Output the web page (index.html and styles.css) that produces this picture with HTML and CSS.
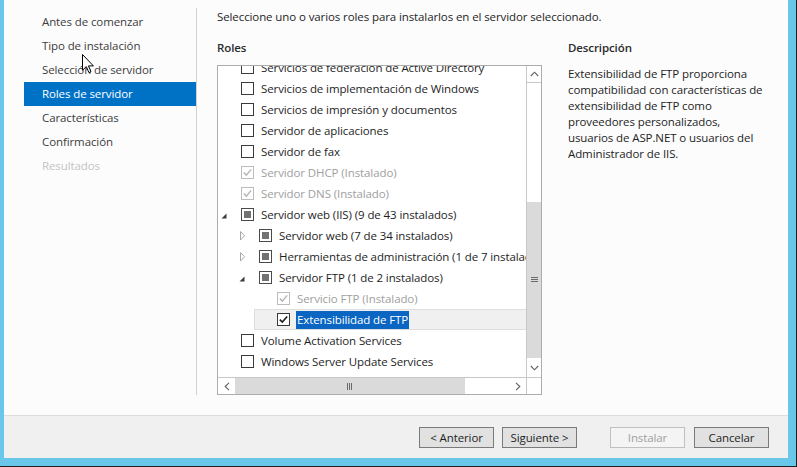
FILE: index.html
```html
<!DOCTYPE html>
<html lang="es">
<head>
<meta charset="utf-8">
<title>Asistente para agregar roles y características</title>
<link rel="stylesheet" href="styles.css">
</head>
<body>
<div class="window">
  <div class="dialog">
    <div class="main">
      <nav class="nav">
        <div class="nav-item">Antes de comenzar</div>
        <div class="nav-item">Tipo de instalación</div>
        <div class="nav-item">Selección de servidor</div>
        <div class="nav-item active">Roles de servidor</div>
        <div class="nav-item">Características</div>
        <div class="nav-item">Confirmación</div>
        <div class="nav-item disabled">Resultados</div>
      </nav>
      <div class="vsep"></div>
      <div class="content">
        <div class="intro">Seleccione uno o varios roles para instalarlos en el servidor seleccionado.</div>
        <div class="cols">
          <div class="left">
            <div class="heading">Roles</div>
            <div class="tree">
              <div class="list">
                <div class="rows">
                  <div class="row"><span class="exp"></span><span class="cb"></span><span class="lbl">Servicios de federación de Active Directory</span></div>
                  <div class="row"><span class="exp"></span><span class="cb"></span><span class="lbl">Servicios de implementación de Windows</span></div>
                  <div class="row"><span class="exp"></span><span class="cb"></span><span class="lbl">Servicios de impresión y documentos</span></div>
                  <div class="row"><span class="exp"></span><span class="cb"></span><span class="lbl">Servidor de aplicaciones</span></div>
                  <div class="row"><span class="exp"></span><span class="cb"></span><span class="lbl">Servidor de fax</span></div>
                  <div class="row dis"><span class="exp"></span><span class="cb"><svg width="11" height="11" viewBox="0 0 11 11"><path d="M1.8 5.6 L4.3 8.1 L9.2 2.4" fill="none" stroke="#b4b4b4" stroke-width="1.4"/></svg></span><span class="lbl">Servidor DHCP (Instalado)</span></div>
                  <div class="row dis"><span class="exp"></span><span class="cb"><svg width="11" height="11" viewBox="0 0 11 11"><path d="M1.8 5.6 L4.3 8.1 L9.2 2.4" fill="none" stroke="#b4b4b4" stroke-width="1.4"/></svg></span><span class="lbl">Servidor DNS (Instalado)</span></div>
                  <div class="row"><span class="exp"><svg class="tri-open" width="6" height="6" viewBox="0 0 6 6"><polygon points="5.5,0.5 5.5,5.5 0.5,5.5" fill="#3c3c3c"/></svg></span><span class="cb ind"><span class="fill"></span></span><span class="lbl">Servidor web (IIS) (9 de 43 instalados)</span></div>
                  <div class="row l1"><span class="exp"><svg class="tri-closed" width="6" height="10" viewBox="0 0 6 10"><polygon points="0.5,0.5 4.5,4.8 0.5,9" fill="none" stroke="#a8a8a8"/></svg></span><span class="cb ind"><span class="fill"></span></span><span class="lbl">Servidor web (7 de 34 instalados)</span></div>
                  <div class="row l1"><span class="exp"><svg class="tri-closed" width="6" height="10" viewBox="0 0 6 10"><polygon points="0.5,0.5 4.5,4.8 0.5,9" fill="none" stroke="#a8a8a8"/></svg></span><span class="cb ind"><span class="fill"></span></span><span class="lbl">Herramientas de administración (1 de 7 instalados)</span></div>
                  <div class="row l1"><span class="exp"><svg class="tri-open" width="6" height="6" viewBox="0 0 6 6"><polygon points="5.5,0.5 5.5,5.5 0.5,5.5" fill="#3c3c3c"/></svg></span><span class="cb ind"><span class="fill"></span></span><span class="lbl">Servidor FTP (1 de 2 instalados)</span></div>
                  <div class="row l2 dis"><span class="exp"></span><span class="cb"><svg width="11" height="11" viewBox="0 0 11 11"><path d="M1.8 5.6 L4.3 8.1 L9.2 2.4" fill="none" stroke="#b4b4b4" stroke-width="1.4"/></svg></span><span class="lbl">Servicio FTP (Instalado)</span></div>
                  <div class="row l2 sel"><span class="exp"></span><span class="cb"><svg width="11" height="11" viewBox="0 0 11 11"><path d="M1.8 5.6 L4.3 8.1 L9.2 2.4" fill="none" stroke="#1e1e1e" stroke-width="1.6"/></svg></span><span class="lbl hl">Extensibilidad de FTP</span></div>
                  <div class="row"><span class="exp"></span><span class="cb"></span><span class="lbl">Volume Activation Services</span></div>
                  <div class="row"><span class="exp"></span><span class="cb"></span><span class="lbl">Windows Server Update Services</span></div>
                </div>
              </div>
              <div class="vscroll">
                <div class="sbtn up"><svg width="9" height="6" viewBox="0 0 9 6"><path d="M0.8 5 L4.5 1.2 L8.2 5" fill="none" stroke="#606060" stroke-width="1.1"/></svg></div>
                <div class="vtrack"><div class="vthumb"><svg width="7" height="6" viewBox="0 0 7 6"><path d="M0 0.5 H7 M0 2.5 H7 M0 4.5 H7" stroke="#6a6a6a" stroke-width="1"/></svg></div></div>
                <div class="sbtn down"><svg width="9" height="6" viewBox="0 0 9 6"><path d="M0.8 1 L4.5 4.8 L8.2 1" fill="none" stroke="#606060" stroke-width="1.1"/></svg></div>
              </div>
              <div class="hscroll">
                <div class="hbtn left"><svg width="6" height="9" viewBox="0 0 6 9"><path d="M5 0.8 L1.2 4.5 L5 8.2" fill="none" stroke="#606060" stroke-width="1.1"/></svg></div>
                <div class="hthumb"><svg width="6" height="7" viewBox="0 0 6 7"><path d="M0.5 0 V7 M2.5 0 V7 M4.5 0 V7" stroke="#6a6a6a" stroke-width="1"/></svg></div>
                <div class="hspace"></div>
                <div class="hbtn right"><svg width="6" height="9" viewBox="0 0 6 9"><path d="M1 0.8 L4.8 4.5 L1 8.2" fill="none" stroke="#606060" stroke-width="1.1"/></svg></div>
              </div>
              <div class="corner"></div>
            </div>
          </div>
          <div class="right">
            <div class="heading">Descripción</div>
            <p class="desc">Extensibilidad de FTP proporciona<br>compatibilidad con características de<br>extensibilidad de FTP como<br>proveedores personalizados,<br>usuarios de ASP.NET o usuarios del<br>Administrador de IIS.</p>
          </div>
        </div>
      </div>
    </div>
    <div class="footer">
      <button class="btn">&lt; Anterior</button>
      <button class="btn next">Siguiente &gt;</button>
      <button class="btn install" disabled>Instalar</button>
      <button class="btn cancel">Cancelar</button>
    </div>
  </div>
  <svg class="cursor" width="13" height="20" viewBox="0 0 13 20"><path d="M0.5 0.5 V16.2 L4.3 12.6 L6.9 18.6 L9 17.7 L6.4 11.9 H11.4 Z" fill="#fff" stroke="#000" stroke-width="1" stroke-linejoin="miter"/></svg>
</div>
</body>
</html>
```
FILE: styles.css
```css
* { box-sizing: border-box; }
html, body { margin: 0; padding: 0; }
body {
  background: #1f1f1f;
  font-family: "Segoe UI", "Open Sans", "Noto Sans", sans-serif;
  font-size: 11.5px;
  letter-spacing: -0.1px;
  color: #1e1e1e;
  width: 797px;
  height: 467px;
  overflow: hidden;
}
.window {
  position: relative;
  width: 796px;
  height: 466px;
  background: #69c8e9;
  padding: 0 8px 8px 4px;
}
.dialog {
  height: 458px;
  background: #fcfcfc;
  display: flex;
  flex-direction: column;
}
.main {
  height: 416px;
  border-bottom: 1px solid #dcdcdc;
  display: flex;
}
.nav {
  width: 192px;
  padding: 10px 0 0 20px;
}
.nav-item {
  height: 24px;
  line-height: 24px;
  padding-left: 18px;
  color: #3c3c3c;
  white-space: nowrap;
}
.nav-item.active {
  background: #0072c6;
  color: #fff;
}
.nav-item.disabled { color: #c4c4c4; }
.vsep {
  width: 1px;
  height: 387px;
  margin-top: 8px;
  background: #d2d2d2;
}
.content {
  flex: 1;
  padding: 9px 0 0 20px;
}
.intro {
  line-height: 16px;
  height: 16px;
  white-space: nowrap;
}
.cols {
  display: flex;
  margin-top: 15px;
}
.left { width: 325px; }
.heading {
  line-height: 16px;
  font-weight: 600;
  color: #2a2a2a;
}
.right { margin-left: 26px; }
.desc {
  margin: 10px 0 0;
  line-height: 16px;
  white-space: nowrap;
}
.tree {
  margin-top: 9px;
  width: 325px;
  height: 330px;
  border: 1px solid #acacac;
  background: #fff;
  display: grid;
  grid-template-columns: 308px 15px;
  grid-template-rows: 311px 17px;
}
.list {
  overflow: hidden;
  position: relative;
}
.rows { margin-top: -9px; }
.row {
  display: flex;
  align-items: center;
  height: 21px;
  white-space: nowrap;
  color: #1e1e1e;
}
.row.l1 { margin-left: 18px; }
.row.l2 { margin-left: 36px; }
.row.dis { color: #a0a0a0; }
.row.sel {
  background: #f0f0f0;
  border: 1px solid #dedede;
  border-right: none;
}
.row.sel .exp { width: 22px; }
.exp {
  width: 23px;
  height: 21px;
  flex: none;
  display: flex;
  align-items: center;
}
.tri-open { margin-left: 3px; margin-top: 3px; }
.tri-closed { margin-left: 4px; }
.cb {
  width: 13px;
  height: 13px;
  flex: none;
  border: 1px solid #3a3a3a;
  background: #fff;
  display: flex;
  align-items: center;
  justify-content: center;
}
.row.dis .cb { border-color: #bcbcbc; }
.cb.ind { border-color: #4a4a4a; }
.cb .fill {
  width: 7px;
  height: 7px;
  background: #727272;
}
.lbl { margin-left: 7px; }
.lbl.hl {
  background: #0a66c2;
  color: #fff;
  padding: 1px 1px;
  line-height: 16px;
  margin-left: 6px;
}
.vscroll {
  border-left: 1px solid #c8c8c8;
  display: flex;
  flex-direction: column;
  background: #fff;
}
.sbtn {
  display: flex;
  align-items: center;
  justify-content: center;
}
.sbtn.up { height: 17px; border-bottom: 1px solid #c8c8c8; }
.vtrack { flex: 1; }
.vthumb {
  margin-top: 119px;
  height: 156px;
  background: #dadada;
  display: flex;
  align-items: center;
  justify-content: center;
}
.sbtn.down { height: 18px; }
.hscroll {
  border-top: 1px solid #c8c8c8;
  display: flex;
  background: #fff;
}
.hbtn {
  display: flex;
  align-items: center;
  justify-content: center;
}
.hbtn.left { width: 17px; }
.hbtn.right { width: 16px; }
.hthumb {
  width: 230px;
  background: #dadada;
  display: flex;
  align-items: center;
  justify-content: center;
}
.hspace { flex: 1; }
.corner {
  border-top: 1px solid #c8c8c8;
  border-left: 1px solid #c8c8c8;
  background: #fff;
}
.footer {
  flex: 1;
  background: #f0f0f0;
  display: flex;
  justify-content: flex-end;
  align-items: flex-start;
  padding: 11px 19px 0 0;
}
.btn {
  width: 75px;
  height: 21px;
  padding: 0;
  font-family: inherit;
  font-size: 11.5px;
  letter-spacing: -0.1px;
  color: #1e1e1e;
  background: #e1e1e1;
  border: 1px solid #7a7a7a;
  border-radius: 0;
}
.btn.next { margin-left: 8px; }
.btn.install {
  margin-left: 33px;
  background: #f4f4f4;
  border-color: #c0c0c0;
  color: #a0a0a0;
}
.btn.cancel { margin-left: 9px; }
.cursor {
  position: absolute;
  left: 82px;
  top: 54px;
}
```
